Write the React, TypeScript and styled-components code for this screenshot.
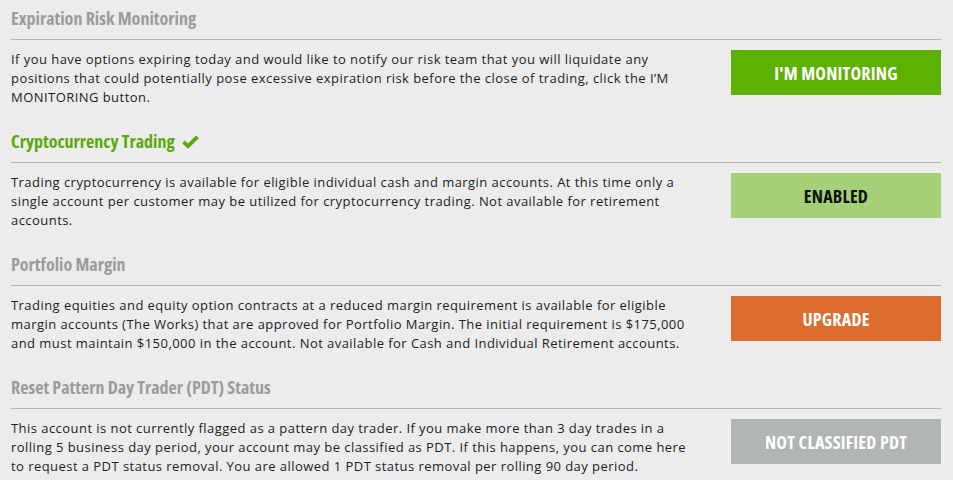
import React from "react";
import styled, { createGlobalStyle } from "styled-components";

const GlobalStyle = createGlobalStyle`
  html, body {
    margin: 0;
    padding: 0;
    background: #ebeceb;
  }
  body {
    font-family: "Open Sans", "Liberation Sans", sans-serif;
    color: #1e1e1e;
  }
`;

const Page = styled.div`
  padding: 6px 12px 0 11px;
`;

const Section = styled.section`
  margin-bottom: 22px;
`;

const Heading = styled.h2<{ $active?: boolean }>`
  margin: 0;
  font-family: "Open Sans", "Liberation Sans Narrow", sans-serif;
  font-stretch: 75%;
  font-weight: 700;
  font-size: 18px;
  line-height: 24px;
  color: ${(p) => (p.$active ? "#5aa80c" : "#9b9c9b")};
  display: flex;
  align-items: center;
  gap: 6px;
  padding-bottom: 9px;
  border-bottom: 1px solid #b6b7b6;
`;

const CheckSvg = styled.svg`
  width: 19px;
  height: 15px;
  margin-top: 1px;
`;

const Check = () => (
  <CheckSvg viewBox="0 0 19 15">
    <polyline
      points="2.5,8 7,12.2 16.5,2.8"
      fill="none"
      stroke="currentColor"
      strokeWidth="3.8"
      strokeLinejoin="miter"
    />
  </CheckSvg>
);

const Row = styled.div`
  display: grid;
  grid-template-columns: 1fr 210px;
  column-gap: 34px;
  padding-top: 10px;
  align-items: start;
`;

const Body = styled.p`
  margin: 0;
  font-size: 13px;
  line-height: 19px;
  letter-spacing: 0.45px;
`;

const ActionButton = styled.button<{ $bg: string; $fg?: string }>`
  height: 45px;
  border: none;
  border-radius: 0;
  background: ${(p) => p.$bg};
  color: ${(p) => p.$fg ?? "#ffffff"};
  font-family: "Open Sans", "Liberation Sans Narrow", sans-serif;
  font-stretch: 75%;
  font-weight: 700;
  font-size: 18px;
  letter-spacing: 0.2px;
  cursor: pointer;
`;

interface FeatureProps {
  title: string;
  active?: boolean;
  body: string;
  label: string;
  bg: string;
  fg?: string;
}

const Feature = ({ title, active, body, label, bg, fg }: FeatureProps) => (
  <Section>
    <Heading $active={active}>
      {title}
      {active && <Check />}
    </Heading>
    <Row>
      <Body>{body}</Body>
      <ActionButton $bg={bg} $fg={fg}>
        {label}
      </ActionButton>
    </Row>
  </Section>
);

const features: FeatureProps[] = [
  {
    title: "Expiration Risk Monitoring",
    body:
      "If you have options expiring today and would like to notify our risk team that you will liquidate any positions that could potentially pose excessive expiration risk before the close of trading, click the I\u2019M MONITORING button.",
    label: "I'M MONITORING",
    bg: "#5db100",
  },
  {
    title: "Cryptocurrency Trading",
    active: true,
    body:
      "Trading cryptocurrency is available for eligible individual cash and margin accounts. At this time only a single account per customer may be utilized for cryptocurrency trading. Not available for retirement accounts.",
    label: "ENABLED",
    bg: "#a4d077",
    fg: "#111111",
  },
  {
    title: "Portfolio Margin",
    body:
      "Trading equities and equity option contracts at a reduced margin requirement is available for eligible margin accounts (The Works) that are approved for Portfolio Margin. The initial requirement is $175,000 and must maintain $150,000 in the account. Not available for Cash and Individual Retirement accounts.",
    label: "UPGRADE",
    bg: "#dc6d2f",
  },
  {
    title: "Reset Pattern Day Trader (PDT) Status",
    body:
      "This account is not currently flagged as a pattern day trader. If you make more than 3 day trades in a rolling 5 business day period, your account may be classified as PDT. If this happens, you can come here to request a PDT status removal. You are allowed 1 PDT status removal per rolling 90 day period.",
    label: "NOT CLASSIFIED PDT",
    bg: "#b1b5b4",
  },
];

export default function App() {
  return (
    <>
      <GlobalStyle />
      <Page>
        {features.map((f) => (
          <Feature key={f.title} {...f} />
        ))}
      </Page>
    </>
  );
}
